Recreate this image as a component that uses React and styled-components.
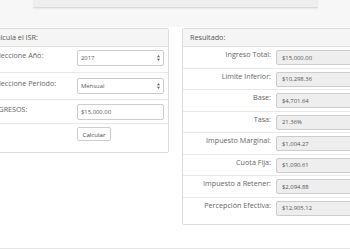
import React from "react";
import styled, { createGlobalStyle } from "styled-components";

const GlobalStyle = createGlobalStyle`
  body {
    margin: 0;
    background: #fff;
    font-family: "Open Sans", "Liberation Sans", sans-serif;
    color: #555;
    overflow: hidden;
  }
`;

const resultados = [
  ["Ingreso Total:", "$15,000.00"],
  ["Limite Inferior:", "$10,298.36"],
  ["Base:", "$4,701.64"],
  ["Tasa:", "21.36%"],
  ["Impuesto Marginal:", "$1,004.27"],
  ["Cuota Fija:", "$1,090.61"],
  ["Impuesto a Retener:", "$2,094.88"],
  ["Percepción Efectiva:", "$12,905.12"],
];

function Arrows() {
  return (
    <svg width="3" height="6" viewBox="0 0 3 6">
      <path d="M1.5 0 L3 2.3 L0 2.3 Z M1.5 6 L3 3.7 L0 3.7 Z" fill="#666" />
    </svg>
  );
}

function App() {
  return (
    <Page>
      <GlobalStyle />
      <TopBand>
        <TopBox />
      </TopBand>
      <Main>
        <Panel>
          <Heading>Calcula el ISR:</Heading>
          <FormRow $h={26} $pt={3}>
            <FormLabel>Seleccione Año:</FormLabel>
            <Select>
              <span>2017</span>
              <Arrows />
            </Select>
          </FormRow>
          <FormRow $h={27} $pt={5}>
            <FormLabel>Seleccione Periodo:</FormLabel>
            <Select>
              <span>Mensual</span>
              <Arrows />
            </Select>
          </FormRow>
          <FormRow $h={24} $pt={4}>
            <FormLabel>INGRESOS:</FormLabel>
            <Input>$15,000.00</Input>
          </FormRow>
          <FormRow $h={28} $pt={3} $last>
            <FormLabel />
            <Button>Calcular</Button>
          </FormRow>
        </Panel>
        <Panel>
          <Heading>Resultado:</Heading>
          {resultados.map(([label, value], i) => (
            <ResultRow key={label} $last={i === resultados.length - 1}>
              <ResultLabel>{label}</ResultLabel>
              <ValueBox>{value}</ValueBox>
            </ResultRow>
          ))}
        </Panel>
      </Main>
      <Footer />
    </Page>
  );
}

export default App;

const Page = styled.div`
  width: 350px;
  height: 250px;
  overflow: hidden;
`;

const TopBand = styled.div`
  height: 27px;
  background: #f7f7f7;
`;

const TopBox = styled.div`
  margin-left: 33px;
  width: 285px;
  height: 8px;
  background: #eeeeee;
  border-bottom: 1px solid #d9d9d9;
  box-shadow: 0 1px 2px rgba(0, 0, 0, 0.06);
  box-sizing: border-box;
`;

const Main = styled.div`
  display: flex;
  align-items: flex-start;
  gap: 13px;
  margin-top: 1px;
  margin-left: -16px;
  height: 197px;
`;

const Panel = styled.div`
  flex: 0 0 185px;
  border: 1px solid #dddddd;
  border-radius: 2px;
  background: #fff;
  box-sizing: border-box;
`;

const Heading = styled.div`
  height: 17px;
  line-height: 17px;
  padding-left: 7px;
  background: #f5f5f5;
  border-bottom: 1px solid #dddddd;
  font-size: 7.2px;
  color: #555;
`;

const FormRow = styled.div`
  display: flex;
  align-items: flex-start;
  height: ${(p) => p.$h}px;
  padding: ${(p) => p.$pt}px 4px 0 6px;
  box-sizing: border-box;
  border-bottom: ${(p) => (p.$last ? "none" : "1px solid #e8e8e8")};
`;

const FormLabel = styled.div`
  flex: 0 0 86px;
  padding-top: 1px;
  font-size: 7.2px;
  line-height: 8px;
  color: #666;
  white-space: nowrap;
`;

const Select = styled.div`
  flex: 1;
  height: 16px;
  display: flex;
  align-items: center;
  justify-content: space-between;
  padding: 0 3px;
  border: 1px solid #cccccc;
  border-radius: 2px;
  box-sizing: border-box;
  font-size: 5.9px;
  color: #555;
  background: #fff;
`;

const Input = styled(Select)`
  justify-content: flex-start;
`;

const Button = styled.div`
  height: 14px;
  width: 34px;
  display: flex;
  align-items: center;
  justify-content: center;
  border: 1px solid #cccccc;
  border-radius: 2px;
  box-sizing: border-box;
  font-size: 6.1px;
  color: #444;
  background: #fff;
`;

const ResultRow = styled.div`
  display: flex;
  align-items: flex-start;
  gap: 5px;
  height: ${(p) => (p.$last ? 26.5 : 21.5)}px;
  padding: 3px 4px 0 6px;
  box-sizing: border-box;
  border-bottom: ${(p) => (p.$last ? "none" : "1px solid #e8e8e8")};
`;

const ResultLabel = styled.div`
  flex: 0 0 82px;
  text-align: right;
  font-size: 7.2px;
  line-height: 8px;
  color: #666;
  white-space: nowrap;
`;

const ValueBox = styled.div`
  flex: 1;
  height: 15px;
  display: flex;
  align-items: center;
  padding-left: 5px;
  background: #eeeeee;
  border: 1px solid #cccccc;
  border-radius: 2px;
  box-sizing: border-box;
  font-size: 5.9px;
  color: #555;
`;

const Footer = styled.div`
  margin-top: 23px;
  border-top: 1px solid #e5e5e5;
`;
